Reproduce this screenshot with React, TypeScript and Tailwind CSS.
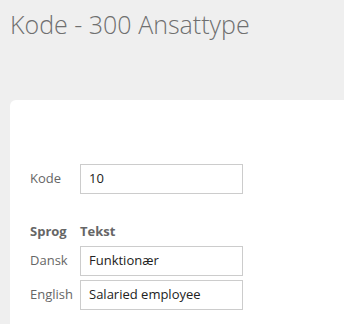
export default function App() {
  const rows = [
    { lang: "Dansk", text: "Funktionær" },
    { lang: "English", text: "Salaried employee" },
  ]

  return (
    <div
      className="h-[324px] w-[344px] overflow-hidden bg-[#efefef]"
      style={{ fontFamily: '"Open Sans", sans-serif' }}
    >
      <h1 className="px-[10px] pt-[9px] text-[25px] font-light leading-[30px] text-[#6f6f6f]">
        Kode - 300 Ansattype
      </h1>

      <div className="ml-[10px] mt-[61px] w-[400px] rounded-[6px] bg-white pb-10 pl-5 pt-16">
        <div className="flex items-center">
          <label className="w-[50px] text-[13px] text-[#666]">Kode</label>
          <div className="flex h-[30px] w-[163px] items-center border border-[#ccc] px-[8px] text-[13px] text-[#222]">
            10
          </div>
        </div>

        <div className="mt-[28px] flex text-[13px] font-bold text-[#666]">
          <span className="w-[50px]">Sprog</span>
          <span>Tekst</span>
        </div>

        <div className="mt-[4px] flex flex-col gap-[4px]">
          {rows.map((r) => (
            <div key={r.lang} className="flex items-center">
              <label className="w-[50px] text-[13px] text-[#666]">{r.lang}</label>
              <div className="flex h-[30px] w-[163px] items-center border border-[#ccc] px-[8px] text-[13px] text-[#222]">
                {r.text}
              </div>
            </div>
          ))}
        </div>
      </div>
    </div>
  )
}
